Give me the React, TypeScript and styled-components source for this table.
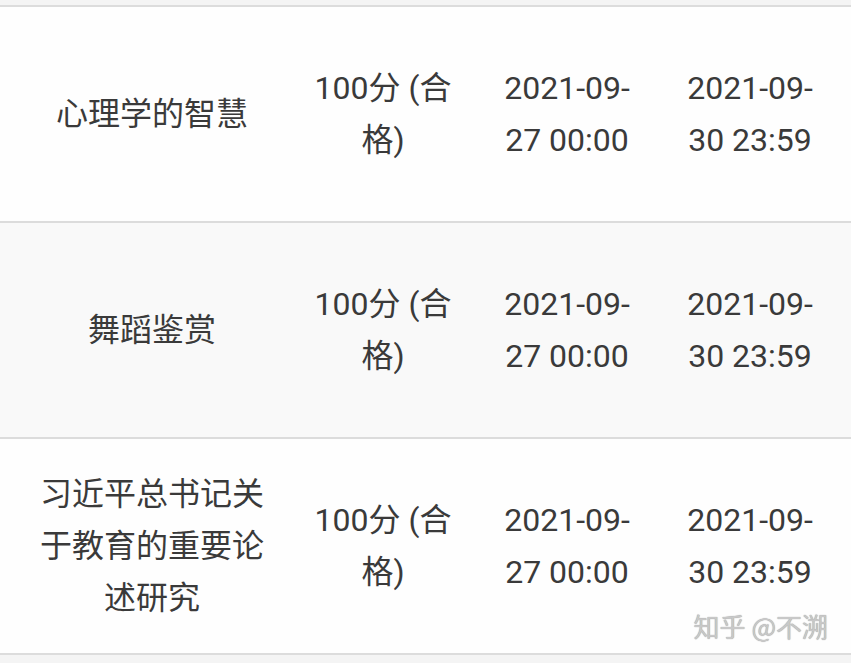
import React from "react";
import styled, { createGlobalStyle } from "styled-components";

const Global = createGlobalStyle`
  html, body { margin: 0; padding: 0; background: #f4f4f4; }
  body { font-family: "Roboto", "Noto Sans CJK SC", sans-serif; }
`;

const Page = styled.div`
  position: relative;
  width: 851px;
  height: 663px;
  overflow: hidden;
  padding-top: 5px;
  box-sizing: border-box;
  background: #f4f4f4;
`;

const Table = styled.div`
  display: flex;
  flex-direction: column;
  border-bottom: 2px solid #dcdcdc;
`;

const Row = styled.div<{ $alt?: boolean }>`
  display: grid;
  grid-template-columns: 304px 158px 210px 179px;
  height: 214px;
  border-top: 2px solid #dcdcdc;
  background: ${(p) => (p.$alt ? "#f9f9f9" : "#fefefe")};
`;

const Cell = styled.div<{ $pad: string }>`
  display: flex;
  align-items: center;
  justify-content: center;
  text-align: center;
  padding: ${(p) => p.$pad};
  font-size: 32px;
  line-height: 52px;
  color: #3a3a3a;
  word-break: normal;
`;

const Watermark = styled.div`
  position: absolute;
  right: 23px;
  top: 610px;
  font-family: "Noto Sans CJK SC", sans-serif;
  font-size: 26px;
  line-height: 32px;
  color: #c8c8c8;
  text-shadow: 0 0 1px #8a8a8a;
`;

const rows = [
  { name: "心理学的智慧" },
  { name: "舞蹈鉴赏" },
  { name: "习近平总书记关于教育的重要论述研究" },
];

export default function App() {
  return (
    <Page>
      <Global />
      <Table>
        {rows.map((r, i) => (
          <Row key={i} $alt={i === 1}>
            <Cell $pad="0 30px 1px">{r.name}</Cell>
            <Cell $pad="0 4px 1px">100分 (合格)</Cell>
            <Cell $pad="0 28px 1px">2021-09-27 00:00</Cell>
            <Cell $pad="0 35px 1px 12px">2021-09-30 23:59</Cell>
          </Row>
        ))}
      </Table>
      <Watermark>知乎 @不溯</Watermark>
    </Page>
  );
}
